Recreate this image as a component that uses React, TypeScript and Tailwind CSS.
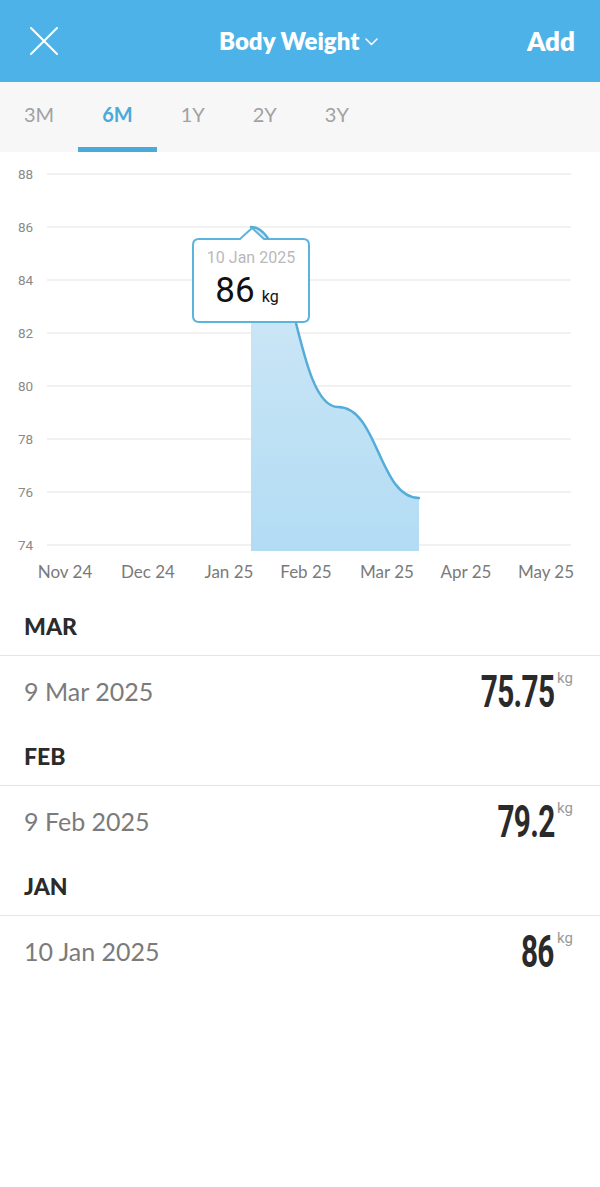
import React from "react";

const yTicks = [88, 86, 84, 82, 80, 78, 76, 74];
const xTicks = [
  { label: "Nov 24", x: 65 },
  { label: "Dec 24", x: 148 },
  { label: "Jan 25", x: 229 },
  { label: "Feb 25", x: 306 },
  { label: "Mar 25", x: 387 },
  { label: "Apr 25", x: 466 },
  { label: "May 25", x: 546 },
];

const entries = [
  { month: "MAR", date: "9 Mar 2025", value: "75.75" },
  { month: "FEB", date: "9 Feb 2025", value: "79.2" },
  { month: "JAN", date: "10 Jan 2025", value: "86" },
];

function Chart() {
  const gy = (v: number) => 22 + ((88 - v) / 2) * 53;
  const line = "M251 75 C294 75 295 255 338 255 C378 255 379 346 419 346";
  const area = line + " L419 399 L251 399 Z";
  return (
    <div className="relative h-[440px] w-full bg-white">
      <svg width="600" height="440" className="block">
        <defs>
          <linearGradient id="fillg" x1="0" y1="0" x2="0" y2="1">
            <stop offset="0" stopColor="#d3e9f6" />
            <stop offset="1" stopColor="#b2dcf4" />
          </linearGradient>
        </defs>
        {yTicks.map((v) => (
          <g key={v}>
            <line x1="47" x2="571" y1={gy(v)} y2={gy(v)} stroke="#e3e3e3" strokeWidth="1" />
            <text
              x="18"
              y={gy(v) + 4.5}
              fontSize="13.5"
              fill="#8a8a8a"
              style={{ fontFamily: "Roboto, 'Noto Sans', sans-serif" }}
            >
              {v}
            </text>
          </g>
        ))}
        <path d={area} fill="url(#fillg)" />
        <path d={line} fill="none" stroke="#55acd9" strokeWidth="2.5" strokeLinecap="round" />
        {xTicks.map((t) => (
          <text
            key={t.label}
            x={t.x}
            y="426"
            textAnchor="middle"
            fontSize="17"
            fill="#7a7a7a"
            style={{ fontFamily: "Lato, 'Noto Sans', sans-serif" }}
          >
            {t.label}
          </text>
        ))}
      </svg>
      {/* tooltip */}
      <div className="absolute left-[192px] top-[86px] h-[84px] w-[118px]">
        <svg width="118" height="84" className="absolute left-0 top-[-12px] overflow-visible">
          <path
            d="M7 13 H48 L60 2 L72 13 H111 Q117 13 117 19 V90 Q117 96 111 96 H7 Q1 96 1 90 V19 Q1 13 7 13 Z"
            fill="white"
            stroke="#5ab4dc"
            strokeWidth="2"
          />
        </svg>
        <div className="relative flex h-full flex-col items-center pt-[10px]">
          <div
            className="text-[16px] leading-[20px] text-[#b9b9b9]"
            style={{ fontFamily: "Roboto, 'Noto Sans', sans-serif" }}
          >
            10 Jan 2025
          </div>
          <div
            className="mt-[5px] flex items-baseline gap-[7px] pr-[8px] text-[#111]"
            style={{ fontFamily: "Roboto, 'Noto Sans', sans-serif" }}
          >
            <span className="text-[35px] leading-[36px]">86</span>
            <span className="text-[16px]">kg</span>
          </div>
        </div>
      </div>
    </div>
  );
}

export default function App() {
  return (
    <div
      className="min-h-[1187px] w-[600px] bg-white"
      style={{ fontFamily: "Lato, 'Noto Sans', sans-serif" }}
    >
      {/* header */}
      <div className="relative flex h-[82px] items-center justify-between bg-[#4cb2e7] px-[30px] pr-[25px]">
        <svg width="28" height="28" viewBox="0 0 28 28">
          <path d="M1 1 L27 27 M27 1 L1 27" stroke="white" strokeWidth="2" strokeLinecap="round" />
        </svg>
        <div className="absolute left-[219px] top-0 flex h-full items-center gap-[6px]">
          <span className="text-[24px] font-extrabold text-white">Body Weight</span>
          <svg width="13" height="8" viewBox="0 0 13 8" className="mt-[1px]">
            <path d="M1 1 L6.5 6.5 L12 1" fill="none" stroke="white" strokeWidth="1.5" strokeLinecap="round" strokeLinejoin="round" />
          </svg>
        </div>
        <span className="text-[26px] font-extrabold text-white">Add</span>
      </div>
      {/* tabs */}
      <div className="flex h-[70px] bg-[#f7f7f7]">
        {["3M", "6M", "1Y", "2Y", "3Y"].map((t) => {
          const active = t === "6M";
          return (
            <div
              key={t}
              className={
                "flex h-full flex-col items-center justify-center px-[24px] " +
                (active ? "border-b-[5px] border-[#4aaadb] pb-[1px] pt-0" : "pb-[6px]")
              }
            >
              <span className={"text-[20px] " + (active ? "font-bold text-[#4aaadb]" : "text-[#a1a1a1]")}>
                {t}
              </span>
            </div>
          );
        })}
      </div>
      <Chart />
      {/* list */}
      <div>
        {entries.map((e) => (
          <div key={e.month}>
            <div className="flex h-[64px] items-center border-b border-[#e5e5e5] px-[24px] pt-[6px]">
              <span className="text-[23px] font-black text-[#2b2b2b]">{e.month}</span>
            </div>
            <div className="flex h-[66px] items-center justify-between pl-[24px] pr-[27px] pt-[6px]">
              <span className="text-[25px] text-[#7b7b7b]">{e.date}</span>
              <div className="flex items-start">
                <span
                  className="mr-[2px] inline-block origin-right text-[45px] font-bold leading-[44px] tracking-[-1px] text-[#2a2a2a] [transform:scaleX(0.66)]"
                  style={{ fontFamily: "Roboto, 'Noto Sans', sans-serif" }}
                >
                  {e.value}
                </span>
                <span
                  className="ml-[1px] mt-[0px] text-[15px] leading-[16px] text-[#999]"
                  style={{ fontFamily: "Roboto, sans-serif" }}
                >
                  kg
                </span>
              </div>
            </div>
          </div>
        ))}
      </div>
    </div>
  );
}
